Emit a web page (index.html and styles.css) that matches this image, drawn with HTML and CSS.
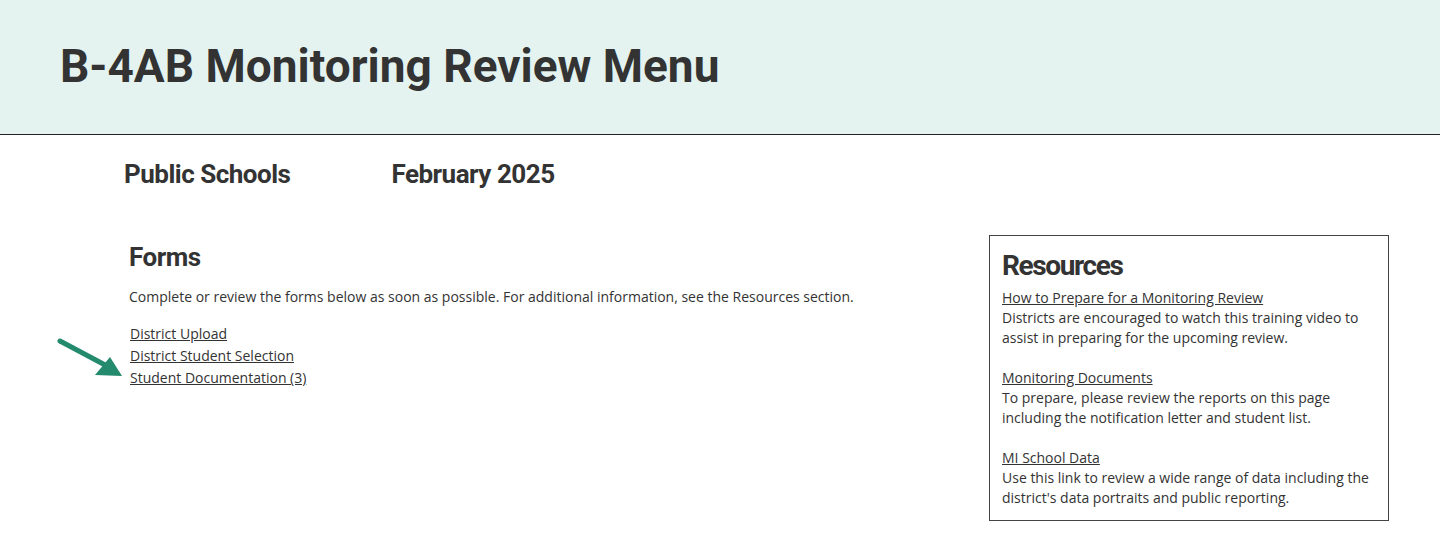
FILE: index.html
```html
<!DOCTYPE html>
<html lang="en">
<head>
<meta charset="utf-8">
<title>B-4AB Monitoring Review Menu</title>
<link rel="stylesheet" href="styles.css">
</head>
<body>
<header class="banner">
  <h1 class="banner-title">B-4AB Monitoring Review Menu</h1>
</header>
<div class="meta">
  <span class="meta-item">Public Schools</span>
  <span class="meta-item">February 2025</span>
</div>
<main class="content">
  <section class="forms">
    <h2 class="forms-title">Forms</h2>
    <p class="forms-intro">Complete or review the forms below as soon as possible. For additional information, see the Resources section.</p>
    <ul class="form-links">
      <li><a href="#">District Upload</a></li>
      <li><a href="#">District Student Selection</a></li>
      <li class="pointed">
        <svg class="arrow" width="72" height="44" viewBox="0 0 72 44" aria-hidden="true">
          <line x1="5" y1="6" x2="52" y2="31" stroke="#238a6d" stroke-width="5" stroke-linecap="round"/>
          <polygon points="67,41 40,40 55,22" fill="#238a6d"/>
        </svg>
        <a href="#">Student Documentation (3)</a>
      </li>
    </ul>
  </section>
  <aside class="resources">
    <h2 class="resources-title">Resources</h2>
    <div class="resource">
      <a href="#">How to Prepare for a Monitoring Review</a>
      <p>Districts are encouraged to watch this training video to assist in preparing for the upcoming review.</p>
    </div>
    <div class="resource">
      <a href="#">Monitoring Documents</a>
      <p>To prepare, please review the reports on this page including the notification letter and student list.</p>
    </div>
    <div class="resource">
      <a href="#">MI School Data</a>
      <p>Use this link to review a wide range of data including the district's data portraits and public reporting.</p>
    </div>
  </aside>
</main>
</body>
</html>
```

FILE: styles.css
```css
* { box-sizing: border-box; }
html, body { margin: 0; padding: 0; background: #fff; }
body {
  font-family: "Open Sans", "DejaVu Sans", sans-serif;
  font-size: 14px;
  color: #333;
}
a { color: #333; text-decoration: underline; }

.banner {
  height: 135px;
  background: #e4f3f0;
  border-bottom: 1px solid #222;
  padding: 38px 0 0 60px;
}
.banner-title {
  margin: 0;
  font-family: Roboto, "Liberation Sans", sans-serif;
  font-weight: 700;
  font-size: 46px;
  line-height: 56px;
  color: #333;
  letter-spacing: 0;
}

.meta {
  display: flex;
  gap: 101px;
  padding: 23px 0 0 124px;
  height: 82px;
}
.meta-item {
  font-family: Roboto, "Liberation Sans", sans-serif;
  font-weight: 700;
  font-size: 26px;
  line-height: 32px;
  letter-spacing: -0.5px;
  color: #333;
}

.content {
  display: flex;
  justify-content: space-between;
  padding: 18px 51px 0 129px;
}
.forms { padding-top: 6px; }
.forms-title {
  margin: 0;
  font-family: Roboto, "Liberation Sans", sans-serif;
  font-weight: 700;
  font-size: 26px;
  line-height: 32px;
  letter-spacing: -0.5px;
  color: #333;
}
.forms-intro {
  margin: 14px 0 16px;
  line-height: 20px;
}
.form-links {
  list-style: none;
  margin: 0;
  padding: 0 0 0 1px;
  line-height: 22px;
}
.form-links li { position: relative; }
.arrow {
  position: absolute;
  left: -75px;
  top: -32px;
}

.resources {
  width: 400px;
  border: 1px solid #444;
  padding: 13px 12px 12px 12px;
  line-height: 20px;
}
.resources-title {
  margin: 0 0 5px;
  font-family: Roboto, "Liberation Sans", sans-serif;
  font-weight: 700;
  font-size: 28px;
  line-height: 34px;
  letter-spacing: -1.4px;
  color: #333;
}
.resource { margin-bottom: 20px; }
.resource:last-child { margin-bottom: 0; }
.resource a { display: inline-block; }
.resource p { margin: 0; }
```
